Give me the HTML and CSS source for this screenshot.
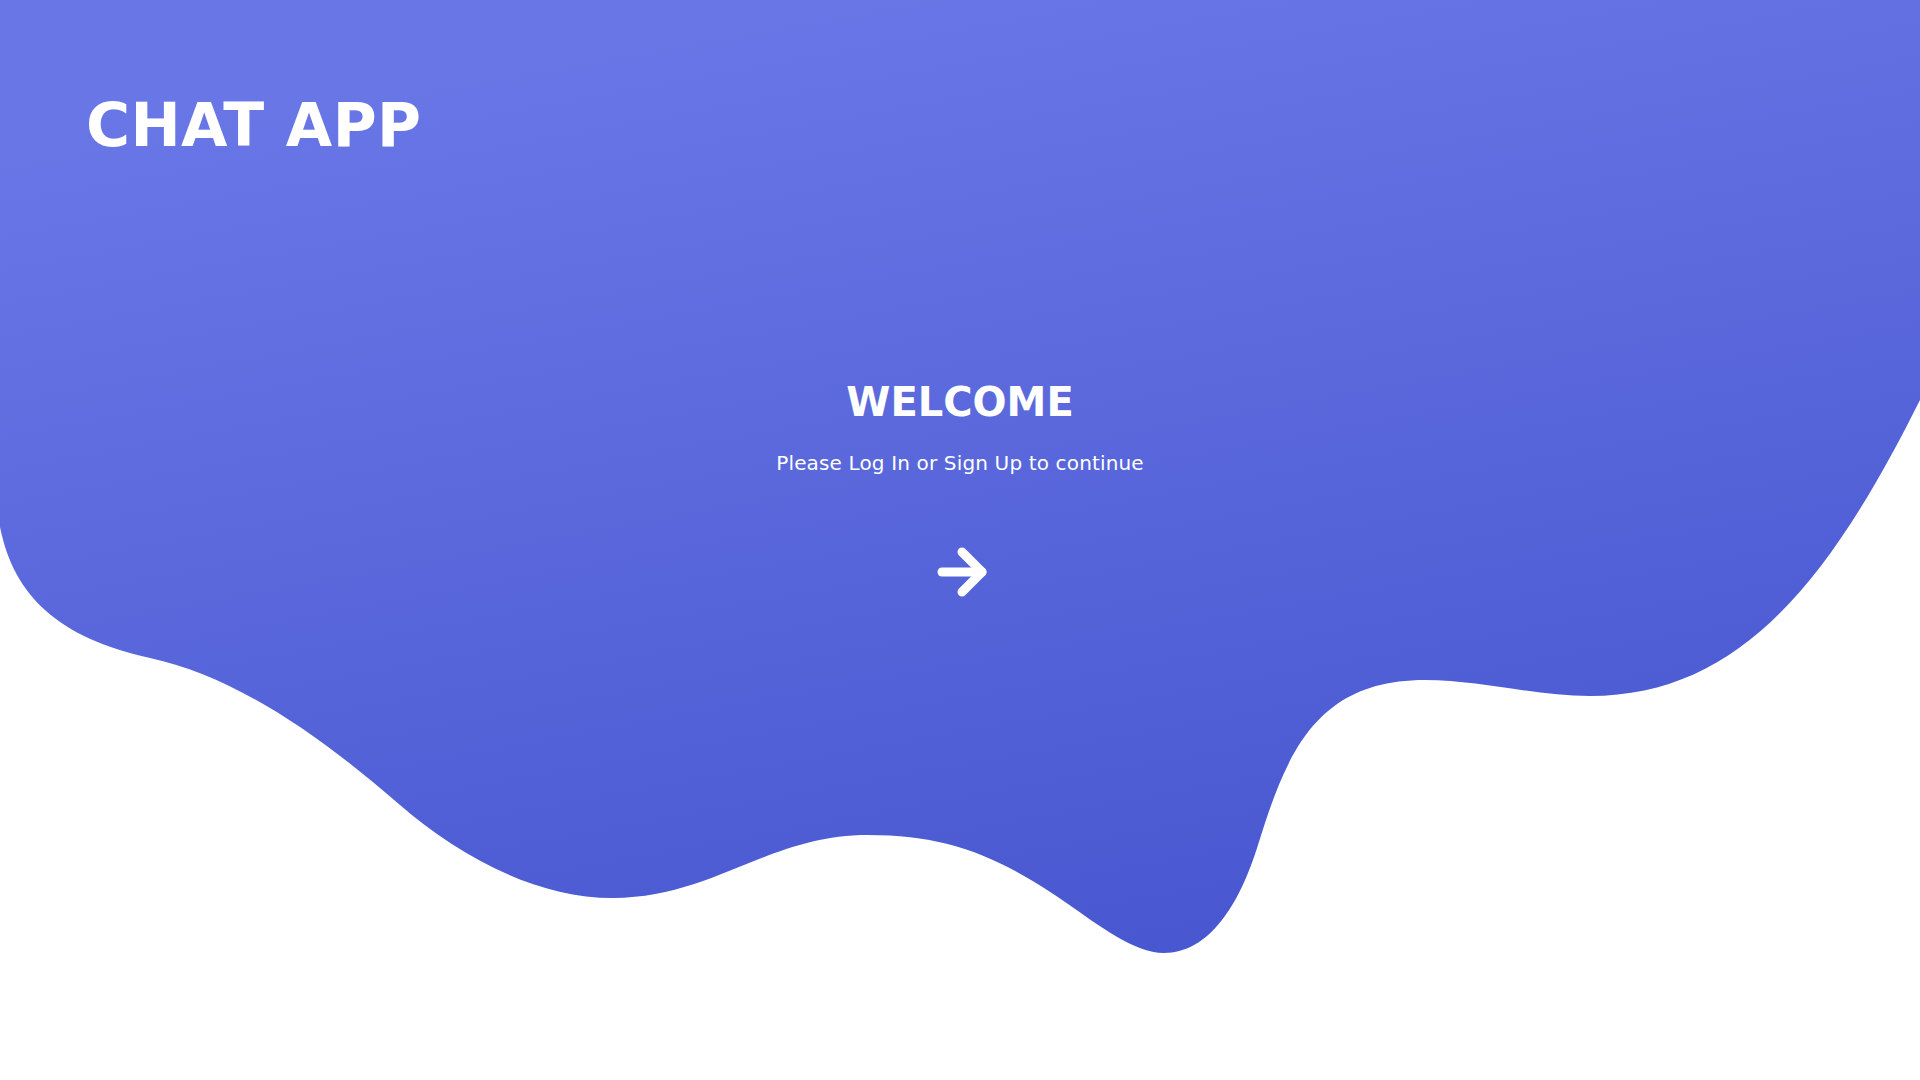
FILE: index.html
```html
<!DOCTYPE html>
<html lang="en">
<head>
<meta charset="utf-8">
<title>Chat App</title>
<link rel="stylesheet" href="styles.css">
</head>
<body>
<svg class="blob" viewBox="0 0 1920 1080" width="1920" height="1080" aria-hidden="true">
  <defs>
    <linearGradient id="g" gradientUnits="userSpaceOnUse" x1="800" y1="0" x2="1000" y2="1100">
      <stop offset="0" stop-color="#6976e6"/>
      <stop offset="1" stop-color="#4454cd"/>
    </linearGradient>
  </defs>
  <path fill="url(#g)" d="M0 0 H1920 V400 C1830 580 1740 696 1590 696 C1535 696 1480 680 1425 680 C1315 680 1286 755 1258 845 C1239.4 905 1209 953 1164 953 C1134 953 1098 924.7 1068 904 C998 855.7 948 835 868 835 C768 835 713 898 613 898 C533 898 455 852.9 400 805 C310 726.7 230 675.6 150 658 C60 638.2 14 597 0 527 Z"/>
</svg>

<header class="header">
  <h1 class="brand">CHAT APP</h1>
</header>

<main class="hero">
  <h2 class="hero-title">WELCOME</h2>
  <p class="hero-text">Please Log In or Sign Up to continue</p>
  <a class="hero-go" href="#" aria-label="Continue">
    <svg width="60" height="60" viewBox="0 0 60 60" fill="none" stroke="#ffffff" stroke-width="9" stroke-linecap="round" stroke-linejoin="round">
      <path d="M12 30 H52"/>
      <path d="M32 10 L52 30 L32 50"/>
    </svg>
  </a>
</main>
</body>
</html>
```

FILE: styles.css
```css
* {
  box-sizing: border-box;
}

html, body {
  margin: 0;
  padding: 0;
}

body {
  width: 1920px;
  height: 1080px;
  overflow: hidden;
  background: #ffffff;
  position: relative;
  font-family: "DejaVu Sans", Verdana, sans-serif;
  color: #ffffff;
}

.blob {
  position: absolute;
  top: 0;
  left: 0;
  z-index: 0;
  display: block;
}

.header {
  position: relative;
  z-index: 1;
  padding: 90px 0 0 86px;
}

.brand {
  margin: 0;
  font-size: 60px;
  font-weight: 700;
  line-height: 70px;
  letter-spacing: 0.4px;
}

.hero {
  position: relative;
  z-index: 1;
  display: flex;
  flex-direction: column;
  align-items: center;
  margin-top: 219px;
}

.hero-title {
  margin: 0;
  font-size: 40px;
  font-weight: 700;
  line-height: 47px;
}

.hero-text {
  margin: 26px 0 0;
  font-size: 20px;
  line-height: 23px;
  letter-spacing: 0.15px;
}

.hero-go {
  display: block;
  margin-top: 67px;
  width: 60px;
  height: 60px;
}

.hero-go svg {
  display: block;
}
```
